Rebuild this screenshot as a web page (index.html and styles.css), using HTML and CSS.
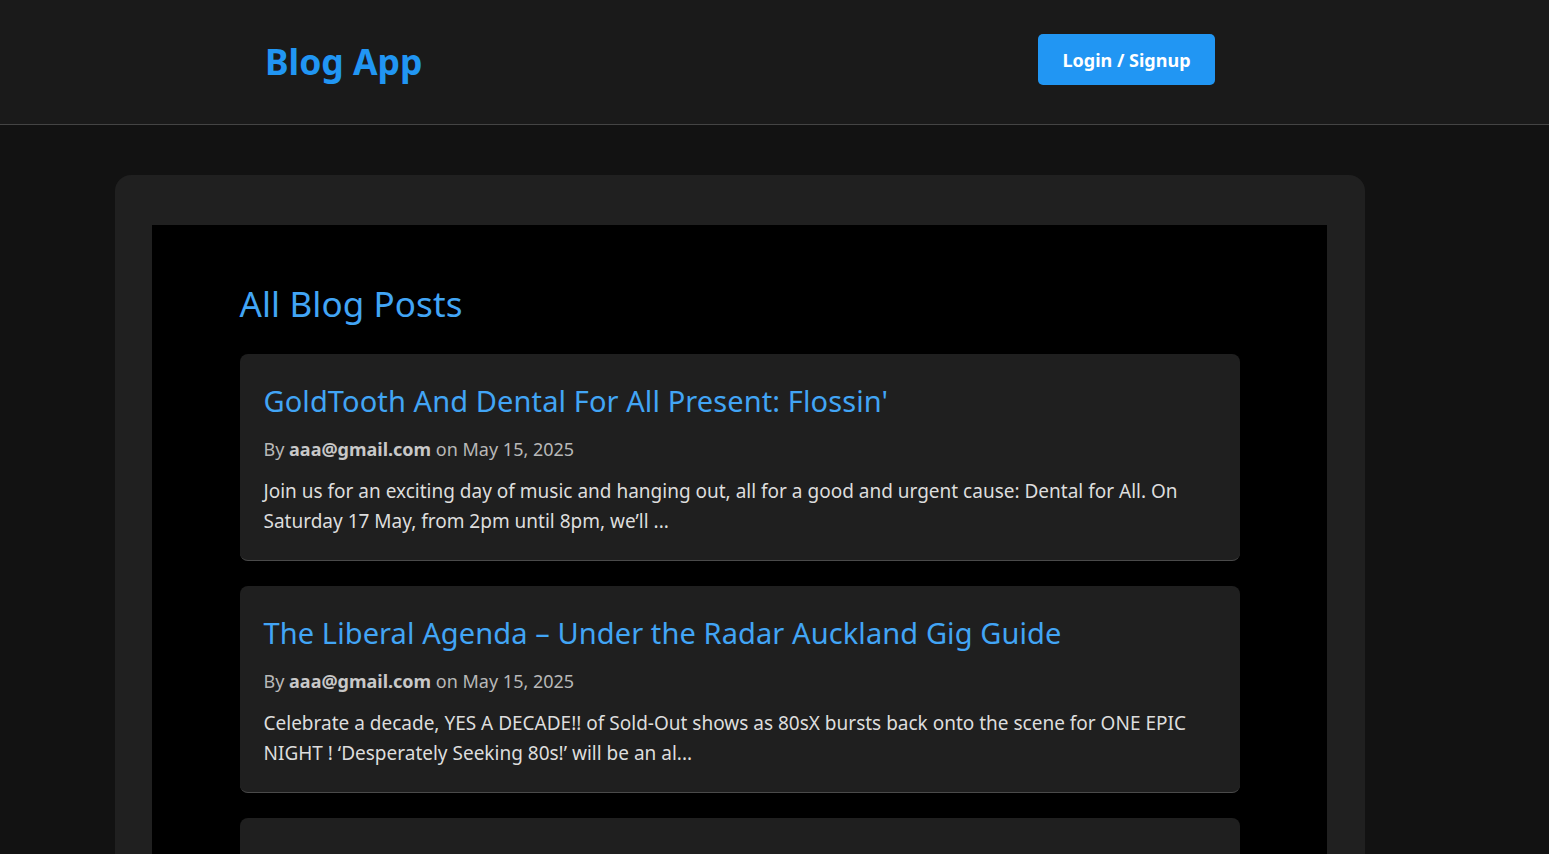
FILE: index.html
```html
<!DOCTYPE html>
<html lang="en">
<head>
<meta charset="utf-8">
<title>Blog App</title>
<link rel="stylesheet" href="styles.css">
</head>
<body>
  <header class="site-header">
    <div class="frame">
      <div class="header-inner">
        <a class="logo" href="#">Blog App</a>
        <button class="login-btn">Login / Signup</button>
      </div>
    </div>
  </header>
  <div class="frame">
    <main class="main">
      <div class="panel">
        <section class="posts">
          <h2 class="posts-title">All Blog Posts</h2>
          <article class="post-card">
            <h3 class="post-title">GoldTooth And Dental For All Present: Flossin'</h3>
            <p class="post-meta">By <strong>aaa@gmail.com</strong> on May 15, 2025</p>
            <p class="post-excerpt">Join us for an exciting day of music and hanging out, all for a good and urgent cause: Dental for All. On Saturday 17 May, from 2pm until 8pm, we’ll ...</p>
          </article>
          <article class="post-card">
            <h3 class="post-title">The Liberal Agenda – Under the Radar Auckland Gig Guide</h3>
            <p class="post-meta">By <strong>aaa@gmail.com</strong> on May 15, 2025</p>
            <p class="post-excerpt">Celebrate a decade, YES A DECADE!! of Sold-Out shows as 80sX bursts back onto the scene for ONE EPIC NIGHT ! ‘Desperately Seeking 80s!’ will be an al...</p>
          </article>
          <article class="post-card">
            <h3 class="post-title">Upcoming Gigs This Weekend</h3>
            <p class="post-meta">By <strong>aaa@gmail.com</strong> on May 15, 2025</p>
            <p class="post-excerpt">More events coming soon...</p>
          </article>
        </section>
      </div>
    </main>
  </div>
</body>
</html>
```

FILE: styles.css
```css
* { box-sizing: border-box; }
html, body {
  margin: 0;
  padding: 0;
  background: #121212;
  font-family: "Noto Sans", "Open Sans", sans-serif;
  color: #ddd;
}
.frame {
  width: 1480px;
}
.site-header {
  background: #1a1a1a;
  border-bottom: 1px solid #444;
  height: 125px;
}
.header-inner {
  width: 950px;
  margin: 0 auto;
  height: 124px;
  display: flex;
  align-items: center;
  justify-content: space-between;
}
.logo {
  color: #2196f3;
  text-decoration: none;
  font-weight: 700;
  font-size: 35.5px;
  margin-top: -2px;
}
.login-btn {
  background: #2196f3;
  color: #fff;
  border: none;
  border-radius: 5px;
  width: 177px;
  height: 51px;
  font-family: inherit;
  font-weight: 700;
  font-size: 18px;
  padding-top: 2px;
  margin-top: -5px;
  cursor: pointer;
}
.main {
  width: 1250px;
  margin: 50px auto 0;
}
.panel {
  background: #202020;
  border-radius: 16px 16px 0 0;
  padding: 50px 38px 0 37px;
}
.posts {
  background: #000;
  padding: 55px 0 40px;
  min-height: 700px;
}
.posts-title {
  width: 1000px;
  margin: 0 auto 26px;
  color: #42a5f5;
  font-weight: 400;
  font-size: 35px;
  line-height: 48px;
  letter-spacing: 0.1px;
}
.post-card {
  width: 1000px;
  margin: 0 auto 25px;
  background: #1f1f1f;
  border-radius: 8px;
  border-bottom: 1px solid #4a4a4a;
  padding: 26px 24px 24px;
  height: 207px;
}
.post-title {
  margin: 0;
  color: #42a5f5;
  font-weight: 400;
  font-size: 29px;
  line-height: 42px;
  letter-spacing: 0.1px;
}
.post-meta {
  margin: 13px 0 0;
  color: #b8b8b8;
  font-size: 18px;
  line-height: 28px;
}
.post-meta strong {
  color: #c8c8c8;
}
.post-excerpt {
  margin: 13px 0 0;
  color: #ddd;
  font-size: 19px;
  line-height: 30px;
}
```
